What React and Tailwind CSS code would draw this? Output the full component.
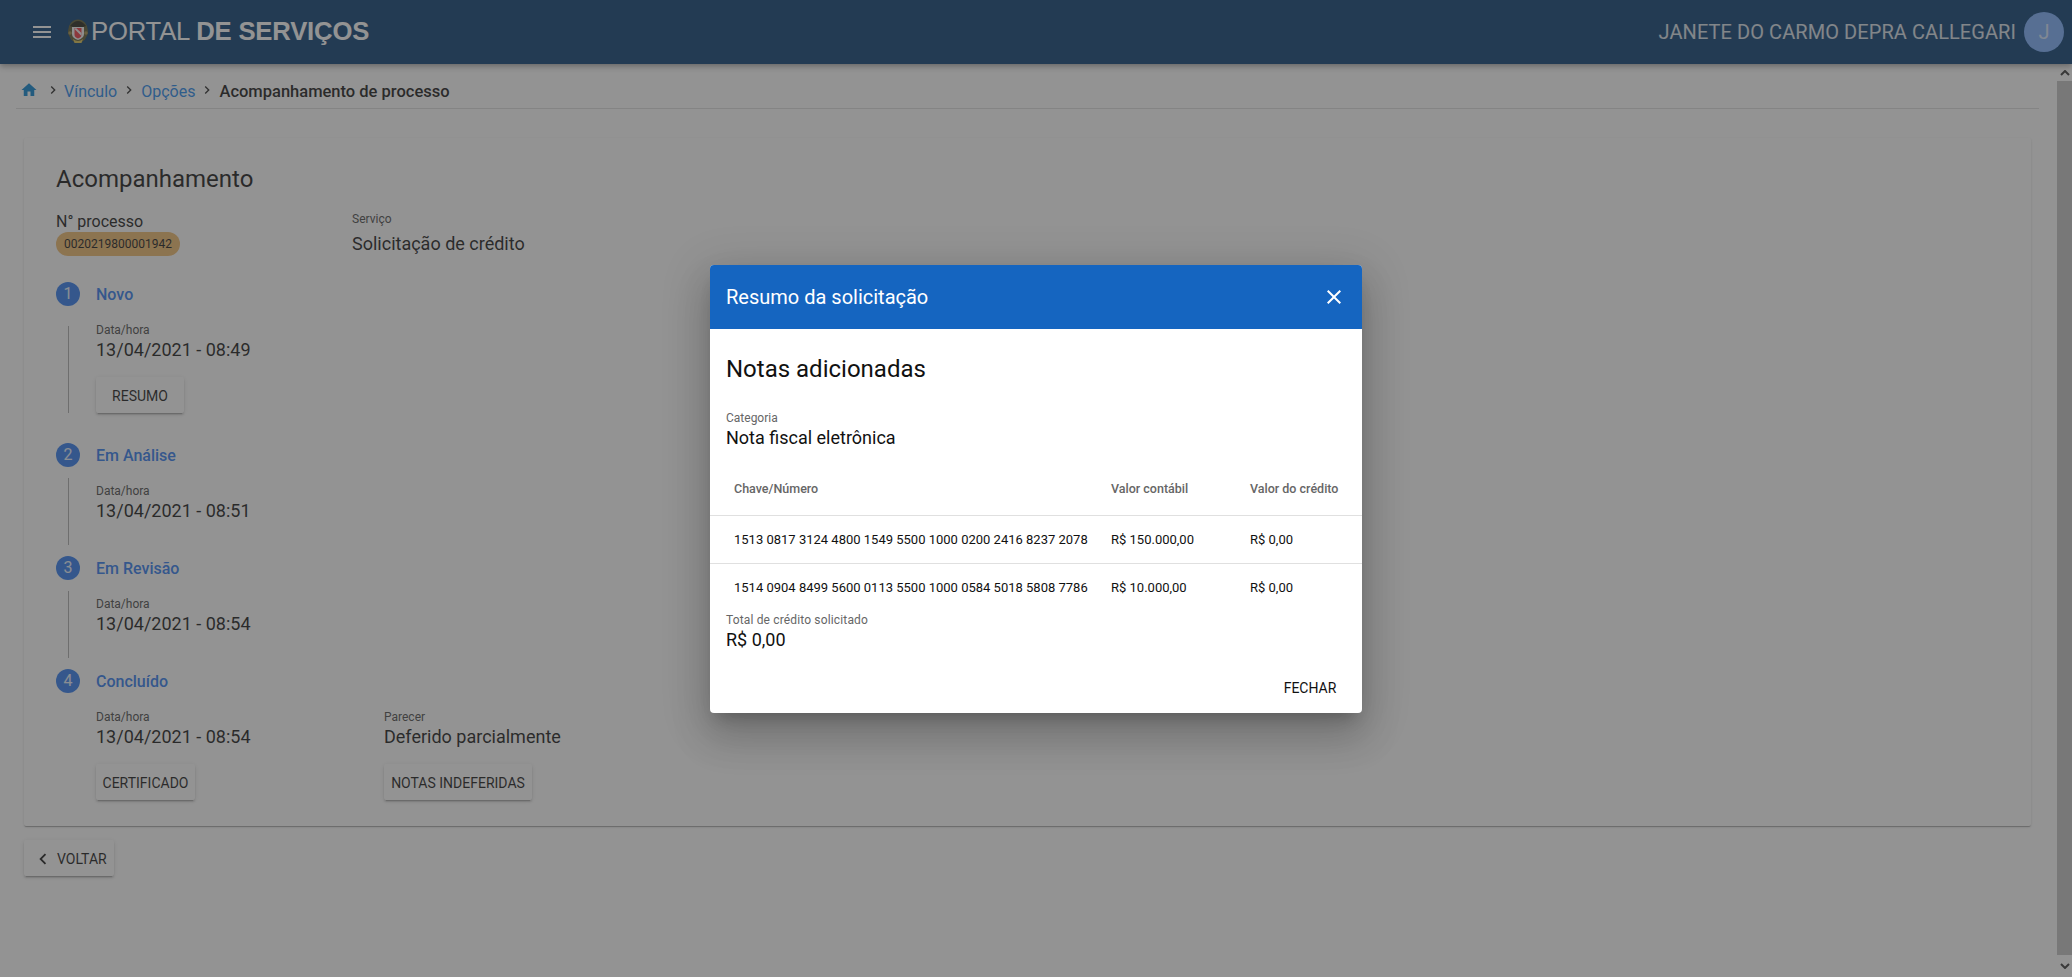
import React from 'react';

const Icon = ({ d, className }) => (
  <svg viewBox="0 0 24 24" fill="currentColor" className={className}>
    <path d={d} />
  </svg>
);

const MENU = 'M3 18h18v-2H3v2zm0-5h18v-2H3v2zm0-7v2h18V6H3z';
const HOME = 'M10 20v-6h4v6h5v-8h3L12 3 2 12h3v8z';
const RIGHT = 'M10 6L8.59 7.41 13.17 12l-4.58 4.59L10 18l6-6z';
const LEFT = 'M15.41 7.41L14 6l-6 6 6 6 1.41-1.41L10.83 12z';
const CLOSE = 'M19 6.41L17.59 5 12 10.59 6.41 5 5 6.41 10.59 12 5 17.59 6.41 19 12 13.41 17.59 19 19 17.59 13.41 12z';

const Crest = () => (
  <svg viewBox="0 0 20 24" className="w-5 h-6 shrink-0">
    <ellipse cx="10" cy="12" rx="10" ry="11.5" fill="#57552a" />
    <path d="M2 7Q10 -3 18 7L15 8H5z" fill="#1d1d10" />
    <circle cx="2" cy="14" r="1.8" fill="#a08c44" />
    <circle cx="18" cy="14" r="1.8" fill="#a08c44" />
    <path d="M4 8h12v7q0 4-6 6q-6-2-6-6z" fill="#f4f4f4" />
    <path d="M6.5 9h7v7q0 2-3.5 3.5q-3.5-1.500-3.500-3.500z" fill="#f0303a" />
    <path d="M6.500 10l7 7v-3l-5.500-5z" fill="#f4f4f4" />
    <path d="M5 20q5 4 10 0l-1.500 4h-7z" fill="#d8bf4c" />
  </svg>
);

const Crumb = ({ children }) => (
  <a className="text-[#1a84ec] text-base leading-6">{children}</a>
);

const Sep = () => <Icon d={RIGHT} className="w-4 h-4 text-[#222] mx-1 -mt-[4px]" />;

const Field = ({ label, value, className = '' }) => (
  <div className={className}>
    <div className="text-xs leading-4 text-[#444]">{label}</div>
    <div className="text-lg leading-6 text-[#111]">{value}</div>
  </div>
);

const RaisedButton = ({ children, className = '' }) => (
  <button className={`h-9 pt-[2px] rounded-[2px] bg-white shadow-[0_3px_1px_-2px_rgba(0,0,0,.2),0_2px_2px_0_rgba(0,0,0,.14),0_1px_5px_0_rgba(0,0,0,.12)] text-sm text-[#111] ${className}`}>
    {children}
  </button>
);

const StepTitle = ({ n, title }) => (
  <div className="flex items-center h-6">
    <div className="w-6 h-6 rounded-full bg-[#2a78f0] text-white/90 flex items-center justify-center text-base">{n}</div>
    <div className="ml-4 pt-[2px] text-base font-medium text-[#2a78f0]">{title}</div>
  </div>
);

const rows = [
  ['1513 0817 3124 4800 1549 5500 1000 0200 2416 8237 2078', 'R$ 150.000,00', 'R$ 0,00'],
  ['1514 0904 8499 5600 0113 5500 1000 0584 5018 5808 7786', 'R$ 10.000,00', 'R$ 0,00'],
];

const Scrollbar = () => (
  <div className="w-[15px] shrink-0 bg-white flex flex-col items-center">
    <div className="h-[17px] flex items-center justify-center">
      <svg viewBox="0 0 10 6" className="w-2.5 h-1.5 text-[#333]" fill="none" stroke="currentColor" strokeWidth="2"><path d="M1 5l4-4 4 4" /></svg>
    </div>
    <div className="flex-1 w-full bg-[#c1c1c1]" />
    <div className="h-[22px] flex items-center justify-center">
      <svg viewBox="0 0 10 6" className="w-2.5 h-1.5 text-[#333]" fill="none" stroke="currentColor" strokeWidth="2"><path d="M1 1l4 4 4-4" /></svg>
    </div>
  </div>
);

const App = () => {
  return (
    <div className="relative h-screen overflow-hidden flex flex-col bg-white font-[Roboto,sans-serif]">
      <header className="h-16 shrink-0 z-[1] bg-[#00376f] shadow-[0_2px_4px_-1px_rgba(0,0,0,.2),0_4px_5px_0_rgba(0,0,0,.14),0_1px_10px_0_rgba(0,0,0,.12)] flex items-center pl-[30px] pr-2 text-white">
        <Icon d={MENU} className="w-6 h-6" />
        <div className="ml-[14px] -mt-[2px]"><Crest /></div>
        <div className="ml-[3px] -mt-[3px] text-[25.7px] leading-8 font-['Liberation_Sans',sans-serif] tracking-[-0.2px]">
          PORTAL <span className="font-bold">DE SERVIÇOS</span>
        </div>
        <div className="ml-auto text-xl tracking-[0.07px] text-white/85">JANETE DO CARMO DEPRA CALLEGARI</div>
        <div className="ml-2 w-10 h-10 rounded-full bg-[#76adff] text-white/70 text-xl flex items-center justify-center">J</div>
      </header>

      <div className="flex-1 flex min-h-0">
        <main className="flex-1 min-w-0">
          <nav className="mt-[10px] mx-4 mr-[18px] h-[35px] pl-1 pt-[2px] border-b border-[#ddd] flex items-center">
            <Icon d={HOME} className="w-[18px] h-[18px] text-[#0080d0] -mt-[5px]" />
            <Icon d={RIGHT} className="w-4 h-4 text-[#222] ml-[7px] mr-[3px] -mt-[4px]" />
            <Crumb>Vínculo</Crumb>
            <Sep />
            <Crumb>Opções</Crumb>
            <Sep />
            <span className="text-[16.5px] font-medium text-[#111]">Acompanhamento de processo</span>
          </nav>

          <section className="mt-[29px] ml-6 mr-[26px] bg-white rounded-[2px] shadow-[0_2px_1px_-1px_rgba(0,0,0,.2),0_1px_1px_0_rgba(0,0,0,.14),0_1px_3px_0_rgba(0,0,0,.12)] pt-6 pl-8 pb-[26px]">
            <h1 className="text-2xl leading-8 pt-px h-8 text-[#111]">Acompanhamento</h1>
            <div className="mt-4 flex">
              <div className="w-[296px] pt-[2px]">
                <div className="text-base leading-5 text-[#111]">N° processo</div>
                <div className="w-[124px] h-6 rounded-full bg-[#f0b868] text-xs text-[#111] flex items-center justify-center">0020219800001942</div>
              </div>
              <Field label="Serviço" value="Solicitação de crédito" className="pt-px [&>div:last-child]:mt-[5px]" />
            </div>

            <div className="mt-[26px]">
              <StepTitle n="1" title="Novo" />
              <div className="mt-5 ml-3 h-[87px] flow-root border-l border-[#aaa] pl-[27px]">
                <Field label="Data/hora" value="13/04/2021 - 08:49" className="-mt-1" />
                <RaisedButton className="mt-[15px] w-[88px]">RESUMO</RaisedButton>
              </div>
            </div>

            <div className="mt-[30px]">
              <StepTitle n="2" title="Em Análise" />
              <div className="mt-[11px] ml-3 h-[67px] border-l border-[#aaa] pl-[27px] pt-[5px]">
                <Field label="Data/hora" value="13/04/2021 - 08:51" />
              </div>
            </div>

            <div className="mt-[11px]">
              <StepTitle n="3" title="Em Revisão" />
              <div className="mt-[11px] ml-3 h-[67px] border-l border-[#aaa] pl-[27px] pt-[5px]">
                <Field label="Data/hora" value="13/04/2021 - 08:54" />
              </div>
            </div>

            <div className="mt-[11px]">
              <StepTitle n="4" title="Concluído" />
              <div className="mt-4 ml-10 flex">
                <div className="w-[288px]">
                  <Field label="Data/hora" value="13/04/2021 - 08:54" />
                  <RaisedButton className="mt-[15px] w-[99px]">CERTIFICADO</RaisedButton>
                </div>
                <div>
                  <Field label="Parecer" value="Deferido parcialmente" />
                  <RaisedButton className="mt-[15px] w-[148px]">NOTAS INDEFERIDAS</RaisedButton>
                </div>
              </div>
            </div>
          </section>

          <RaisedButton className="mt-[14px] ml-6 w-[90px] flex items-center pl-2">
            <Icon d={LEFT} className="w-[22px] h-[22px] text-[#111] -mr-[1px]" />
            <span className="ml-1">VOLTAR</span>
          </RaisedButton>
        </main>
        <Scrollbar />
      </div>

      <div className="absolute inset-0 z-10 bg-[#3e3e3e]/[.56] flex items-center justify-center">
        <div className="w-[652px] h-[448px] bg-white rounded overflow-hidden shadow-[0_11px_15px_-7px_rgba(0,0,0,.2),0_24px_38px_3px_rgba(0,0,0,.14),0_9px_46px_8px_rgba(0,0,0,.12)] text-[#111]">
          <div className="h-16 bg-[#1565c0] flex items-center justify-between pl-4 pr-[16px] text-white">
            <span className="text-xl font-normal">Resumo da solicitação</span>
            <Icon d={CLOSE} className="w-6 h-6" />
          </div>
          <div className="pt-6">
            <div className="px-4">
              <h2 className="text-2xl leading-8">Notas adicionadas</h2>
              <div className="mt-[25px] text-xs leading-4 text-[#666]">Categoria</div>
              <div className="text-lg leading-6">Nota fiscal eletrônica</div>
            </div>
            <div className="mt-[13px]">
              <div className="h-[53px] pt-[2px] border-b border-[#e0e0e0] pl-6 grid grid-cols-[377px_139px_1fr] items-center text-[12.5px] font-medium text-[#666]">
                <span>Chave/Número</span>
                <span>Valor contábil</span>
                <span>Valor do crédito</span>
              </div>
              {rows.map((r, i) => (
                <div key={i} className={`h-12 pl-6 grid grid-cols-[377px_139px_1fr] items-center text-[13px] ${i === 0 ? 'border-b border-[#e0e0e0] pt-[2px]' : ''}`}>
                  <span>{r[0]}</span>
                  <span>{r[1]}</span>
                  <span>{r[2]}</span>
                </div>
              ))}
            </div>
            <div className="px-4">
              <div className="text-xs leading-4 tracking-[0.15px] text-[#666]">Total de crédito solicitado</div>
              <div className="text-lg leading-6">R$ 0,00</div>
            </div>
            <div className="mt-[18px] flex justify-end pr-[17px]">
              <button className="h-9 w-[70px] text-sm">FECHAR</button>
            </div>
          </div>
        </div>
      </div>
    </div>
  );
};

export default App;
